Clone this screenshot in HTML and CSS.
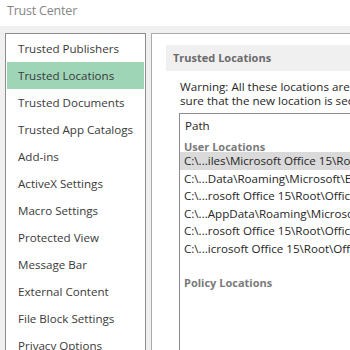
FILE: index.html
```html
<!DOCTYPE html>
<html lang="en">
<head>
<meta charset="UTF-8" />
<title>Trust Center</title>
<link rel="stylesheet" href="styles.css">
</head>
<body>
<div class="titlebar">Trust Center</div>
<div class="main">
  <ul class="nav">
    <li>Trusted Publishers</li>
    <li class="active">Trusted Locations</li>
    <li>Trusted Documents</li>
    <li>Trusted App Catalogs</li>
    <li>Add-ins</li>
    <li>ActiveX Settings</li>
    <li>Macro Settings</li>
    <li>Protected View</li>
    <li>Message Bar</li>
    <li>External Content</li>
    <li>File Block Settings</li>
    <li>Privacy Options</li>
  </ul>
  <div class="content">
    <div class="section-head">Trusted Locations</div>
    <p class="warning">Warning: All these locations are treated as trusted sources for opening files. If you change or add a location, make<br>sure that the new location is secure.</p>
    <div class="listbox">
      <div class="col-head">Path</div>
      <div class="group">User Locations</div>
      <div class="row selected">C:\...iles\Microsoft Office 15\Root\Templates\</div>
      <div class="row">C:\...Data\Roaming\Microsoft\Excel\XLSTART\</div>
      <div class="row">C:\...rosoft Office 15\Root\Office15\XLSTART\</div>
      <div class="row">C:\...AppData\Roaming\Microsoft\Templates\</div>
      <div class="row">C:\...rosoft Office 15\Root\Office15\STARTUP\</div>
      <div class="row">C:\...icrosoft Office 15\Root\Office15\Library\</div>
      <div class="group policy">Policy Locations</div>
    </div>
  </div>
</div>
</body>
</html>
```

FILE: styles.css
```css
* {
  box-sizing: border-box;
}
html, body {
  height: 100%;
}
body {
  margin: 0;
  background: #f0f0f0;
  font-family: 'Open Sans', 'Noto Sans', sans-serif;
  font-size: 11.6px;
  color: #262626;
  overflow: hidden;
  display: flex;
  flex-direction: column;
}
.titlebar {
  height: 26px;
  background: #fff;
  color: #858585;
  font-size: 12.5px;
  letter-spacing: -0.2px;
  line-height: 22px;
  padding-left: 7px;
  flex: none;
}
.main {
  flex: 1;
  display: flex;
  gap: 5px;
  padding: 7px 0 0 5px;
  min-height: 0;
}
.nav {
  list-style: none;
  margin: 0;
  padding: 1px 1px 0;
  width: 141px;
  flex: none;
  background: #fff;
  border: 1px solid #8c8c8c;
  border-bottom: none;
}
.nav li {
  height: 27px;
  line-height: 27px;
  padding-left: 11px;
  white-space: nowrap;
  color: #3a3a3a;
}
.nav li.active {
  background: #9fd5b7;
}
.content {
  flex: 1;
  background: #fff;
  border: 1px solid #ababab;
  border-right: none;
  border-bottom: none;
  padding: 11px 0 0 14px;
  white-space: nowrap;
  overflow: hidden;
}
.section-head {
  background: #f0f0f0;
  height: 26px;
  line-height: 26px;
  padding-left: 7px;
  font-size: 11px;
  font-weight: bold;
  color: #6a6a6a;
}
.warning {
  margin: 9px 0 0 0;
  padding-left: 14px;
  line-height: 14px;
}
.listbox {
  margin: 5px 0 0 13px;
  border: 1px solid #8c8c8c;
  border-right: none;
  border-bottom: none;
  height: 300px;
  padding-top: 3px;
}
.col-head {
  height: 18px;
  line-height: 18px;
  padding-left: 5px;
}
.group {
  height: 17px;
  line-height: 14px;
  padding: 5px 0 0 4px;
  font-size: 11px;
  font-weight: bold;
  color: #7a7a7a;
}
.row {
  height: 17.5px;
  line-height: 17.5px;
  padding-left: 4px;
}
.row.selected {
  background: #dadada;
}
.group.policy {
  margin-top: 14px;
}
```
